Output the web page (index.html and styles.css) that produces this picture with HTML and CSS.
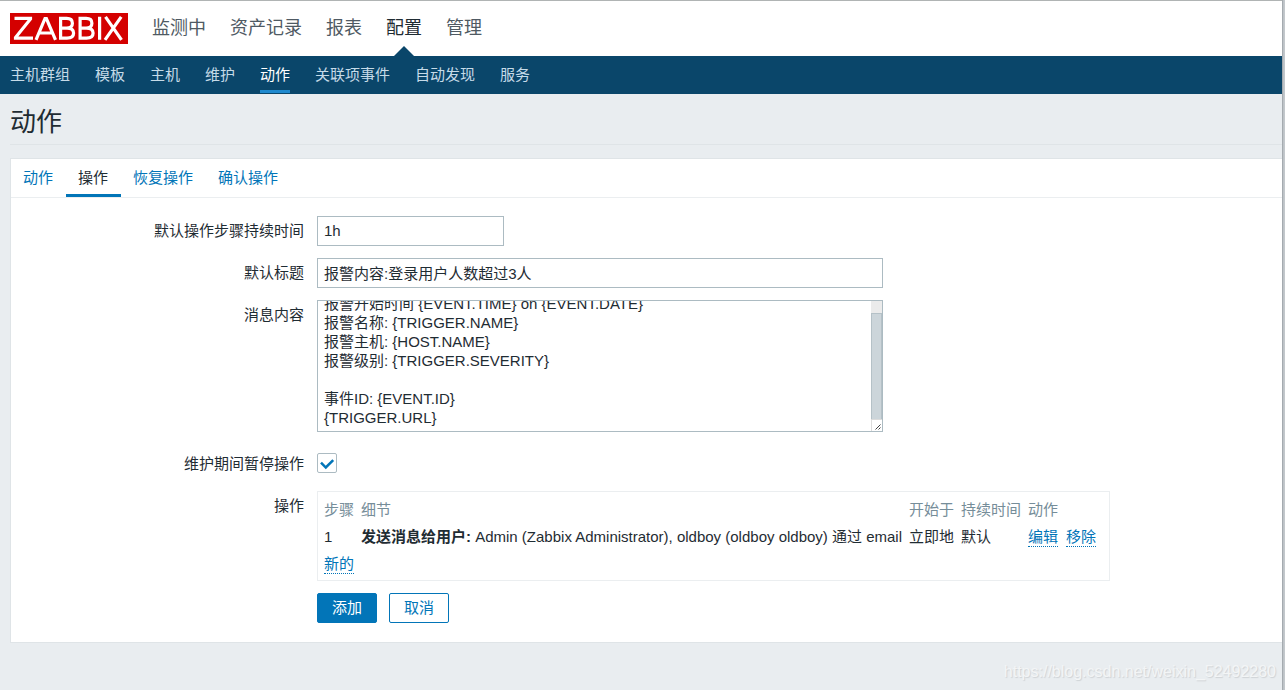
FILE: index.html
```html
<!DOCTYPE html>
<html lang="zh-CN">
<head>
<meta charset="utf-8">
<title>动作</title>
<link rel="stylesheet" href="styles.css">
</head>
<body>
<div class="page">
  <header class="top">
    <a class="logo" href="#" aria-label="ZABBIX">
      <svg viewBox="0 0 118 31" width="118" height="31" aria-hidden="true">
        <rect width="118" height="31" fill="#d40000"/>
        <g fill="none" stroke="#fff" stroke-width="3.200">
          <path d="M4.500 5.400h16v.6L5.500 24.600v.6h17.500"/>
          <path d="M26 26.800L35 5.500h1.400L45.500 26.800M29.500 20h12.500"/>
          <path d="M50.600 5.400v19.800h6.400c4.500 0 6.600-2.200 6.600-5.100 0-3-2.100-5-6.600-5h-6.400 6c3.800 0 5.800-1.800 5.800-4.900s-2-4.800-5.800-4.800z"/>
          <path d="M70.100 5.400v19.800h6.400c4.500 0 6.600-2.200 6.600-5.100 0-3-2.100-5-6.600-5h-6.400 6c3.800 0 5.800-1.800 5.800-4.900s-2-4.800-5.800-4.800z"/>
          <path d="M89.600 3.800v23M95.500 3.800l16 23M111.200 3.800L95 26.800"/>
        </g>
      </svg>
    </a>
    <nav class="main-nav">
      <a href="#">监测中</a>
      <a href="#">资产记录</a>
      <a href="#">报表</a>
      <a class="current" href="#">配置</a>
      <a href="#">管理</a>
    </nav>
  </header>
  <nav class="sub-nav">
    <a href="#">主机群组</a>
    <a href="#">模板</a>
    <a href="#">主机</a>
    <a href="#">维护</a>
    <a class="current" href="#">动作</a>
    <a href="#">关联项事件</a>
    <a href="#">自动发现</a>
    <a href="#">服务</a>
  </nav>
  <main class="content">
    <h1>动作</h1>
    <form class="panel">
      <nav class="tabs">
        <a href="#">动作</a>
        <a class="current" href="#">操作</a>
        <a href="#">恢复操作</a>
        <a href="#">确认操作</a>
      </nav>
      <div class="fields">
        <label for="period">默认操作步骤持续时间</label>
        <div><input class="text short" id="period" type="text" value="1h"></div>
        <label for="subject">默认标题</label>
        <div><input class="text" id="subject" type="text" value="报警内容:登录用户人数超过3人"></div>
        <label for="message">消息内容</label>
        <div class="message-box">
          <textarea class="text message" id="message">报警开始时间 {EVENT.TIME} on {EVENT.DATE}
报警名称: {TRIGGER.NAME}
报警主机: {HOST.NAME}
报警级别: {TRIGGER.SEVERITY}

事件ID: {EVENT.ID}
{TRIGGER.URL}</textarea>
          <div class="scrollbar" aria-hidden="true"><div class="thumb"></div></div>
          <svg class="grip" viewBox="0 0 10 11" width="11" height="12" aria-hidden="true"><path d="M3.500 9.500l5-5M6.500 9.500l2-2" fill="none" stroke="#444" stroke-width="1"/></svg>
        </div>
        <label class="pause-label" for="pause">维护期间暂停操作</label>
        <div class="pause">
          <input class="check" id="pause" type="checkbox" checked>
          <svg class="tick" viewBox="0 0 20 20" width="20" height="20" aria-hidden="true"><path d="M4 9.600l4.800 4.900 7.400-7.400" fill="none" stroke="#0275b8" stroke-width="2.500"/></svg>
        </div>
        <span class="label">操作</span>
        <div class="operations">
          <table>
            <thead>
              <tr><th>步骤</th><th>细节</th><th>开始于</th><th>持续时间</th><th>动作</th></tr>
            </thead>
            <tbody>
              <tr>
                <td>1</td>
                <td><b>发送消息给用户:</b> Admin (Zabbix Administrator), oldboy (oldboy oldboy) 通过 email</td>
                <td>立即地</td>
                <td>默认</td>
                <td><span class="links"><button class="link" type="button">编辑</button><button class="link" type="button">移除</button></span></td>
              </tr>
              <tr><td colspan="5"><button class="link" type="button">新的</button></td></tr>
            </tbody>
          </table>
        </div>
        <div class="buttons">
          <button class="button primary" type="button">添加</button>
          <button class="button" type="button">取消</button>
        </div>
      </div>
    </form>
  </main>
  <div class="watermark">https://blog.csdn.net/weixin_52492280</div>
</div>
<script src="script.js"></script>
</body>
</html>
```
FILE: styles.css
```css
* { box-sizing: border-box; }
body {
  margin: 0;
  background: #c3c8cc;
  color: #1f2c33;
  font: 15px/20px "Liberation Sans", "Noto Sans CJK SC", sans-serif;
}
a { text-decoration: none; }
input, textarea, button { font: inherit; color: inherit; }
.page {
  position: relative;
  min-height: 100vh;
  margin-right: 3px;
  border-top: 1px solid #b0b4b4;
  background: #e9edf0;
  box-shadow: 1px 0 1px #a5abb0;
}
.top {
  display: flex;
  align-items: center;
  gap: 24px;
  height: 55px;
  padding-left: 10px;
  background: #fff;
}
.logo svg { display: block; }
.main-nav { display: flex; gap: 24px; height: 100%; }
.main-nav a {
  position: relative;
  font-size: 18px;
  line-height: 54px;
  color: #4f5a63;
}
.main-nav .current { color: #1f2c33; }
.main-nav .current::after {
  content: "";
  position: absolute;
  bottom: 0;
  left: 50%;
  margin-left: -10px;
  border: 10px solid transparent;
  border-top: 0;
  border-bottom-color: #0a466a;
}
.sub-nav {
  display: flex;
  gap: 25px;
  height: 38px;
  padding: 0 10px;
  background: #0a466a;
}
.sub-nav a {
  height: 37px;
  line-height: 37px;
  color: #c6dbe8;
}
.sub-nav .current { color: #fff; border-bottom: 3px solid #1f89ce; }
.content { padding: 0 0 46px 10px; }
h1 {
  margin: 0 0 13px;
  padding: 10px 0 4px;
  border-bottom: 1px solid #dfe4e7;
  font-size: 26px;
  font-weight: 400;
  line-height: 36px;
}
.panel {
  border: 1px solid #dfe4e7;
  border-right: 0;
  background: #fff;
}
.tabs { display: flex; height: 39px; border-bottom: 1px solid #ebeef0; }
.tabs a {
  height: 38px;
  padding: 0 13px 0 12px;
  line-height: 38px;
  color: #0275b8;
}
.tabs .current { color: #1f2c33; border-bottom: 3px solid #0275b8; }
.fields {
  display: grid;
  grid-template-columns: 293px 1fr;
  column-gap: 13px;
  row-gap: 12px;
  padding: 18px 0 19px;
}
.fields label, .label { text-align: right; line-height: 30px; }
.text {
  display: block;
  width: 566px;
  max-width: 100%;
  height: 30px;
  padding: 0 6px 1px;
  border: 1px solid #acbbc2;
  border-radius: 0;
  background: #fff;
  outline: 0;
}
.short { width: 187px; }
.message-box { position: relative; justify-self: start; }
.message {
  height: 132px;
  padding: 4px 18px 4px 6px;
  line-height: 19px;
  overflow-y: scroll;
  resize: none;
  scrollbar-width: none;
}
.scrollbar {
  position: absolute;
  top: 1px;
  right: 1px;
  bottom: 13px;
  width: 11px;
  padding-top: 12px;
  background: #ebebeb;
}
.thumb { height: 100%; border: 1px solid #b5c1c7; border-bottom: 0; background: #ccd5da; }
.grip {
  position: absolute;
  right: 1px;
  bottom: 1px;
  border: solid #dcdcdc;
  border-width: 1px 0 0 1px;
}
.pause-label, .pause { margin-top: 5px; }
.pause { position: relative; padding: 4px 0 1px; }
.check {
  display: block;
  appearance: none;
  width: 20px;
  height: 20px;
  margin: 0;
  border: 1px solid #acbbc2;
  border-radius: 2px;
  background: #fff;
}
.tick { position: absolute; top: 4px; left: 0; pointer-events: none; visibility: hidden; }
.check:checked + .tick { visibility: visible; }
.operations {
  justify-self: start;
  padding: 4px 6px 3px;
  border: 1px solid #ebeef0;
}
table { border-collapse: collapse; }
th, td {
  height: 27px;
  padding: 0 7px 0 0;
  text-align: left;
  white-space: nowrap;
}
th { color: #768d99; font-weight: 400; }
.links { display: flex; gap: 8px; }
.link {
  padding: 0;
  border: 0;
  border-bottom: 1px dotted #0275b8;
  background: none;
  color: #0275b8;
  line-height: 19px;
}
.buttons { grid-column: 2; display: flex; gap: 12px; }
.button {
  width: 60px;
  height: 30px;
  padding: 0;
  border: 1px solid #0275b8;
  border-radius: 2px;
  background: #fff;
  color: #0275b8;
}
.primary { background: #0275b8; color: #fff; }
.watermark {
  position: absolute;
  right: 6px;
  bottom: 8px;
  font-size: 16px;
  color: #f3f5f6;
  text-shadow: 1px 1px 1px #ced2d5;
}
```
FILE: script.js
```js
const message = document.getElementById("message");
message.scrollTop = message.scrollHeight;
```
